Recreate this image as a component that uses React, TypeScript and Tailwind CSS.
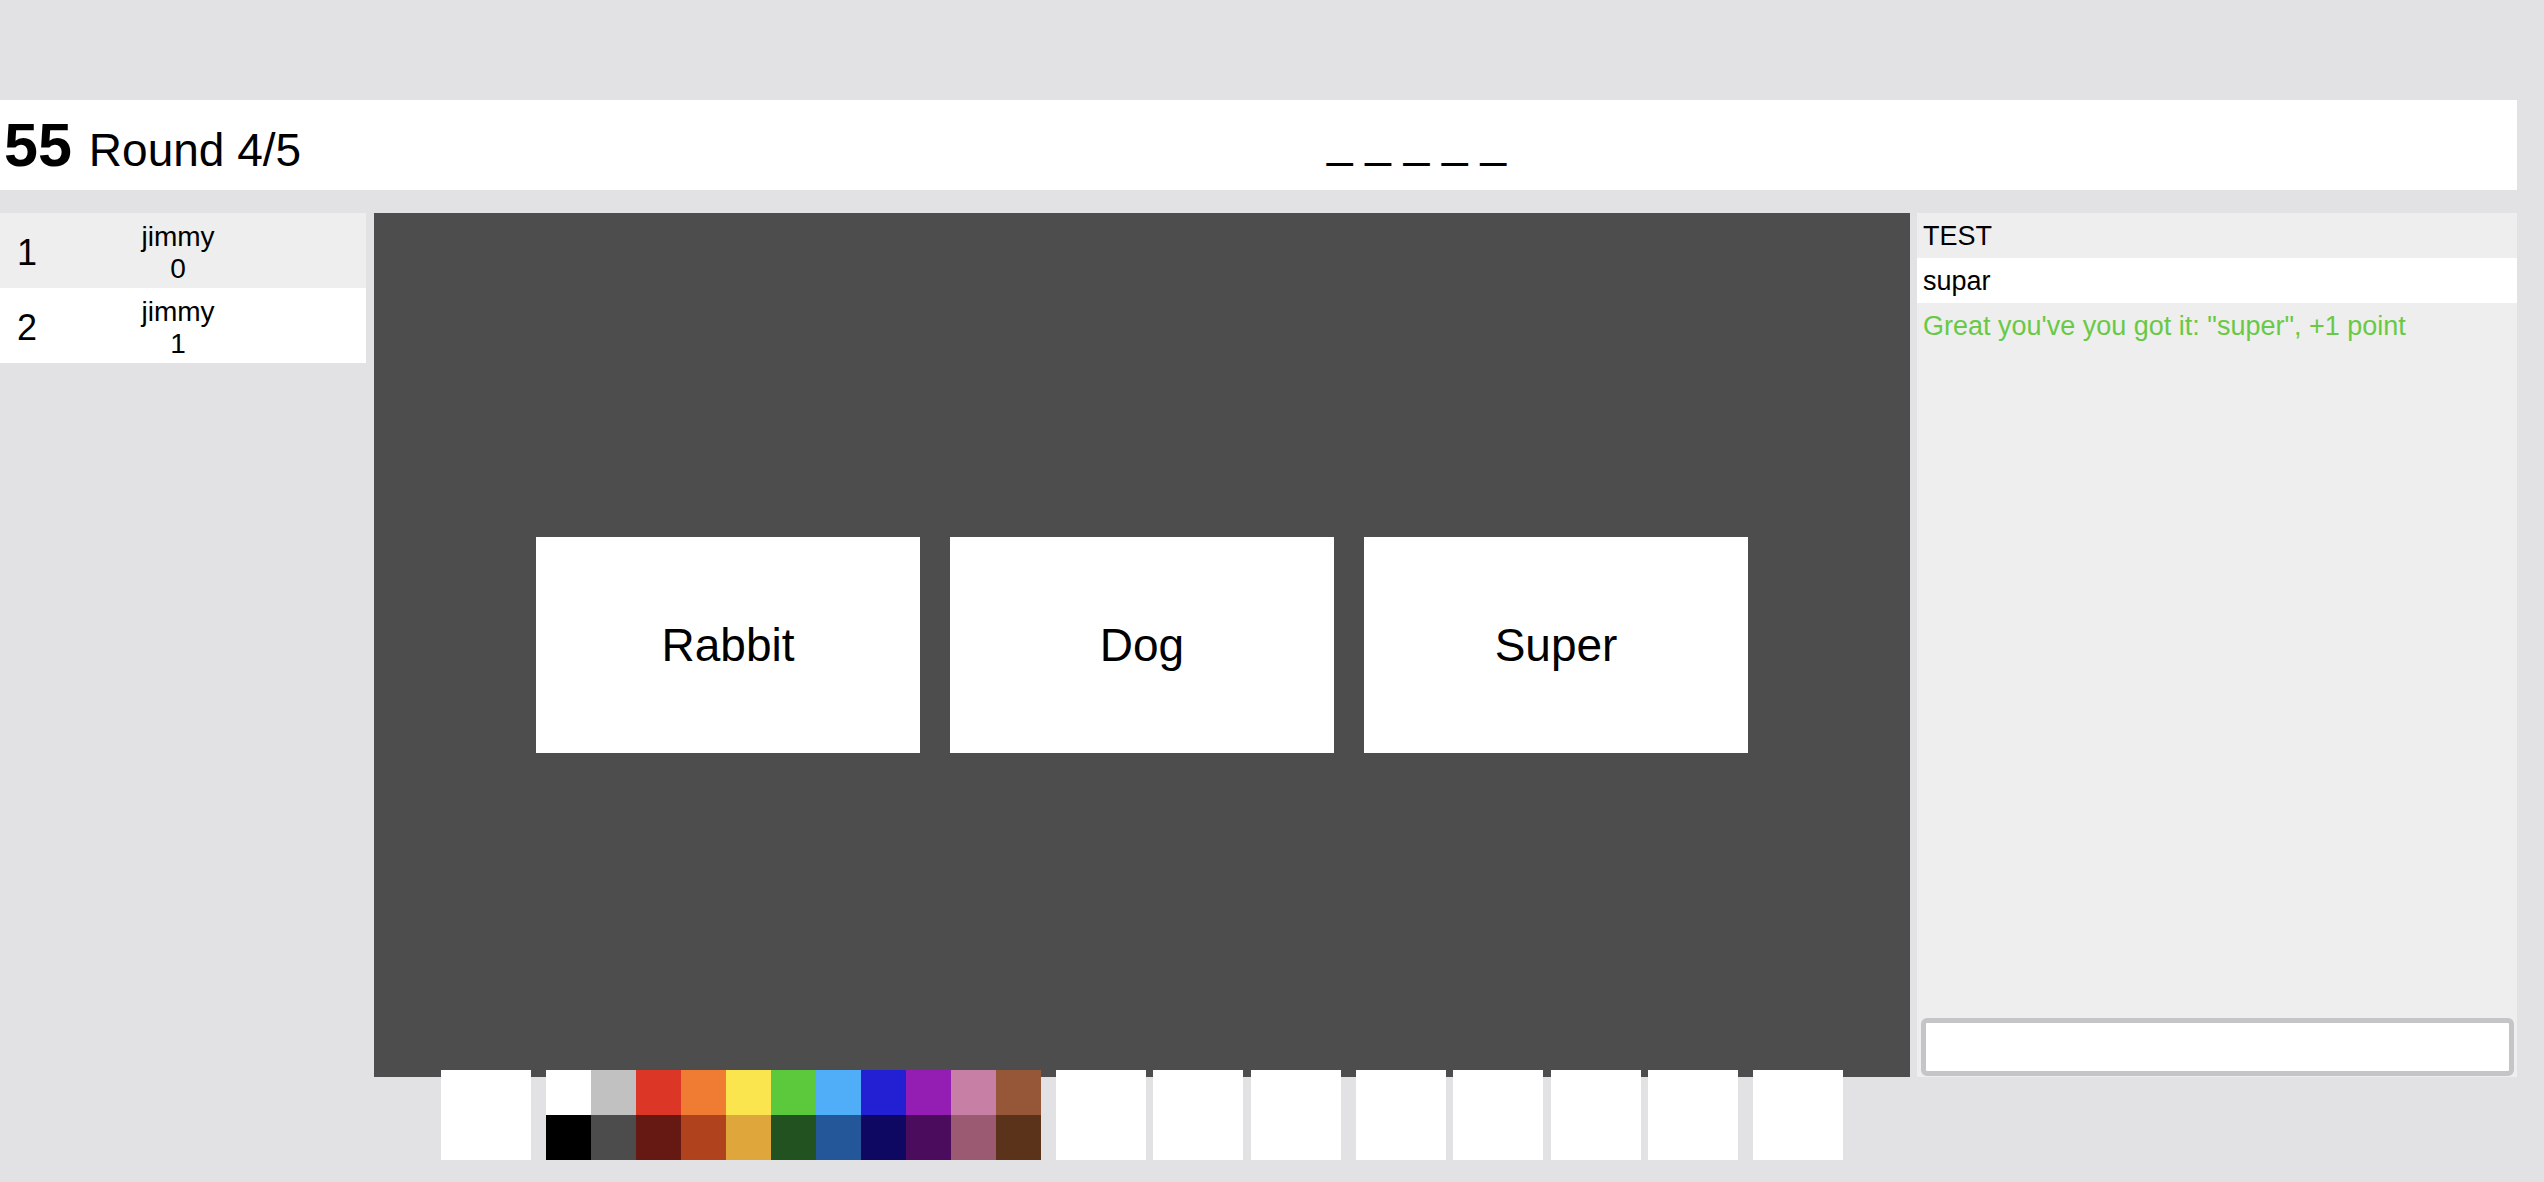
import React from "react";

const players = [
  { rank: 1, name: "jimmy", score: 0 },
  { rank: 2, name: "jimmy", score: 1 },
];

const topColors = ["#ffffff", "#c1c1c1", "#dc3626", "#ef7c32", "#fbe54f", "#5cc93c", "#50aef8", "#231fd2", "#941db4", "#c77fa6", "#955737"];
const bottomColors = ["#000000", "#4c4c4c", "#661813", "#b0431d", "#dea63b", "#225220", "#24569a", "#0e0862", "#4b0c5e", "#9c5972", "#5b321a"];

const words = ["Rabbit", "Dog", "Super"];

function ToolBox() {
  return <div className="w-[90px] h-[90px] bg-white" />;
}

export default function App() {
  return (
    <div className="min-h-screen bg-[#e2e2e4] pt-[100px] font-['Liberation_Sans',Arial,sans-serif] text-black">
      <div className="w-[2517px]">
        {/* header */}
        <div className="h-[90px] bg-white flex items-center">
          <div className="flex items-baseline pl-[4px] w-[300px] shrink-0 whitespace-nowrap">
            <span className="text-[61px] font-bold leading-none">55</span>
            <span className="text-[46px] ml-[17px] leading-none">Round 4/5</span>
          </div>
          <div className="flex-1 text-center text-[46px] pl-[16px] -mt-[8px] whitespace-nowrap">_ _ _ _ _</div>
        </div>

        <div className="flex mt-[23px]">
          {/* players */}
          <div className="w-[366px]">
            {players.map((p, i) => (
              <div key={i} className={`h-[75px] flex items-center pt-[4px] ${i % 2 === 0 ? "bg-[#eeeeee]" : "bg-white"}`}>
                <span className="w-[80px] pl-[17px] text-[36px]">{p.rank}</span>
                <div className="w-[196px] text-center text-[28px] leading-[32px]">
                  <div>{p.name}</div>
                  <div>{p.score}</div>
                </div>
              </div>
            ))}
          </div>

          {/* canvas + tools */}
          <div className="w-[1536px] ml-[8px]">
            <div className="h-[864px] bg-[#4d4d4d] flex items-center justify-center gap-[30px]">
              {words.map((w) => (
                <div key={w} className="w-[384px] h-[216px] bg-white flex items-center justify-center text-[46px]">
                  {w}
                </div>
              ))}
            </div>
            <div className="flex justify-center gap-[15px] -mt-[7px]">
              <ToolBox />
              <div className="flex flex-col">
                <div className="flex">
                  {topColors.map((c) => (
                    <div key={c} className="w-[45px] h-[45px]" style={{ backgroundColor: c }} />
                  ))}
                </div>
                <div className="flex">
                  {bottomColors.map((c) => (
                    <div key={c} className="w-[45px] h-[45px]" style={{ backgroundColor: c }} />
                  ))}
                </div>
              </div>
              <div className="flex gap-[7.5px]">
                <ToolBox />
                <ToolBox />
                <ToolBox />
              </div>
              <div className="flex gap-[7.5px]">
                <ToolBox />
                <ToolBox />
                <ToolBox />
                <ToolBox />
              </div>
              <ToolBox />
            </div>
          </div>

          {/* chat */}
          <div className="w-[600px] h-[864px] ml-[7px] bg-[#eeeeee] flex flex-col text-[27px]">
            <div className="flex-1">
              <div className="h-[45px] flex items-center pl-[6px] pt-[2px]">TEST</div>
              <div className="h-[45px] flex items-center pl-[6px] pt-[2px] bg-white">supar</div>
              <div className="h-[45px] flex items-center pl-[6px] pt-[2px] text-[#69c945]">
                Great you've you got it: "super", +1 point
              </div>
            </div>
            <div className="pl-[4px] pr-[3px] pb-[1px]">
              <input
                type="text"
                className="w-full h-[58px] bg-white border-[5px] border-[#c5c5c7] rounded-[6px] outline-none px-2 text-[26px]"
              />
            </div>
          </div>
        </div>
      </div>
    </div>
  );
}
